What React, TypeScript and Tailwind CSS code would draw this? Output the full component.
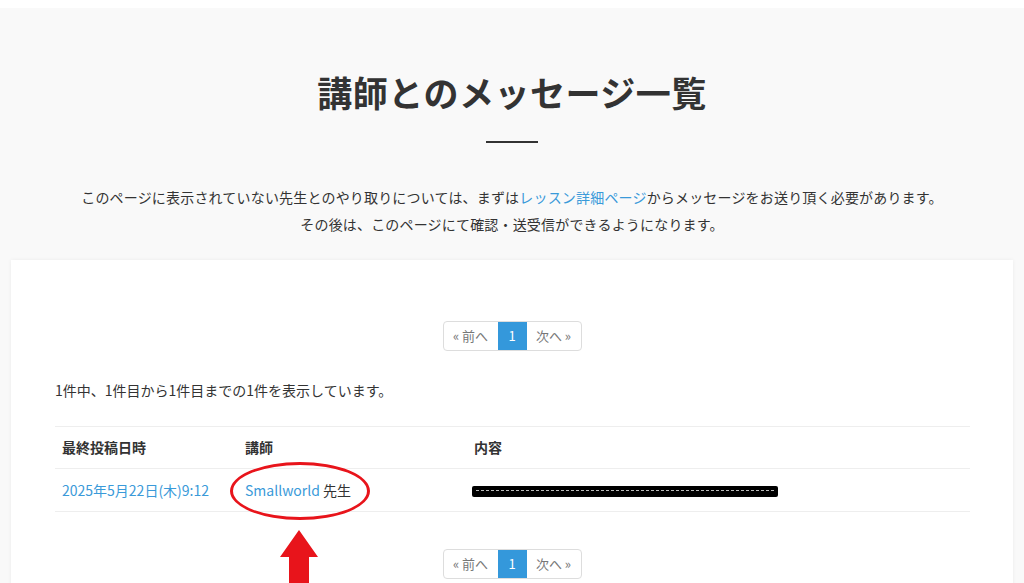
import React from 'react';

const font = { fontFamily: '"Noto Sans CJK JP", "Noto Sans", sans-serif' };

const Pagination = () => (
  <div className="flex justify-center">
    <div className="flex h-[30px] rounded-[4px] border border-[#dddddd] text-[13px] text-[#777777] overflow-hidden">
      <span className="w-[54px] flex items-center justify-center">« 前へ</span>
      <span className="w-[29px] flex items-center justify-center bg-[#3498db] text-white">1</span>
      <span className="w-[54px] flex items-center justify-center">次へ »</span>
    </div>
  </div>
);

export default function App() {
  return (
    <div className="relative w-[1024px] h-[583px] overflow-hidden bg-[#f9f9f9] text-[#333333]" style={font}>
      <div className="h-2 bg-white" />

      {/* Heading */}
      <div className="pt-[58px] flex flex-col items-center">
        <h1 className="text-[35px] leading-[52px] font-bold text-[#333333] tracking-[0.5px]">講師とのメッセージ一覧</h1>
        <div className="mt-[23px] w-[52px] h-[2px] bg-[#333333]" />
        <div className="mt-[41px] text-[14px] leading-[27px] text-center tracking-[0.18px]">
          <p>
            このページに表示されていない先生とのやり取りについては、まずは
            <span className="text-[#3a9ad9]">レッスン詳細ページ</span>
            からメッセージをお送り頂く必要があります。
          </p>
          <p>その後は、このページにて確認・送受信ができるようになります。</p>
        </div>
      </div>

      {/* Card */}
      <div className="mx-[11px] mt-[22px] bg-white shadow-[0_0_4px_rgba(0,0,0,0.06)] px-[44px] pt-[61px] pb-10">
        <Pagination />
        <p className="mt-[27px] text-[14px] leading-[24px]">1件中、1件目から1件目までの1件を表示しています。</p>
        <table className="mt-[24px] w-[915px] text-[14px] border-collapse">
          <thead>
            <tr className="border-t border-[#eeeeee] h-[42px] text-left">
              <th className="w-[183px] pl-[7px] font-bold">最終投稿日時</th>
              <th className="w-[229px] pl-[7px] font-bold">講師</th>
              <th className="pl-[7px] font-bold">内容</th>
            </tr>
          </thead>
          <tbody>
            <tr className="border-t border-b border-[#eeeeee] h-[43px]">
              <td className="pl-[7px] text-[#3a9ad9]">2025年5月22日(木)9:12</td>
              <td className="pl-[7px]">
                <span className="text-[#3a9ad9]">Smallworld</span> 先生
              </td>
              <td className="pl-[5px]">
                <span className="relative inline-block w-[306px] h-[11px] bg-black rounded-[2px] align-middle">
                  <span className="absolute left-[4px] right-[4px] top-[4px] h-[1px] border-t border-dashed border-[#bbbbbb]" />
                </span>
              </td>
            </tr>
          </tbody>
        </table>
        <div className="mt-[37px]">
          <Pagination />
        </div>
      </div>

      {/* annotation: red ellipse */}
      <div className="absolute left-[230px] top-[462px] w-[140px] h-[58px] rounded-[50%] border-[3px] border-[#e8141b]" />
      {/* annotation: red arrow */}
      <svg className="absolute left-[278px] top-[528px]" width="42" height="56" viewBox="0 0 42 56">
        <polygon points="21,2 40,29 31,29 31,56 11,56 11,29 2,29" fill="#e8141b" />
      </svg>
    </div>
  );
}
